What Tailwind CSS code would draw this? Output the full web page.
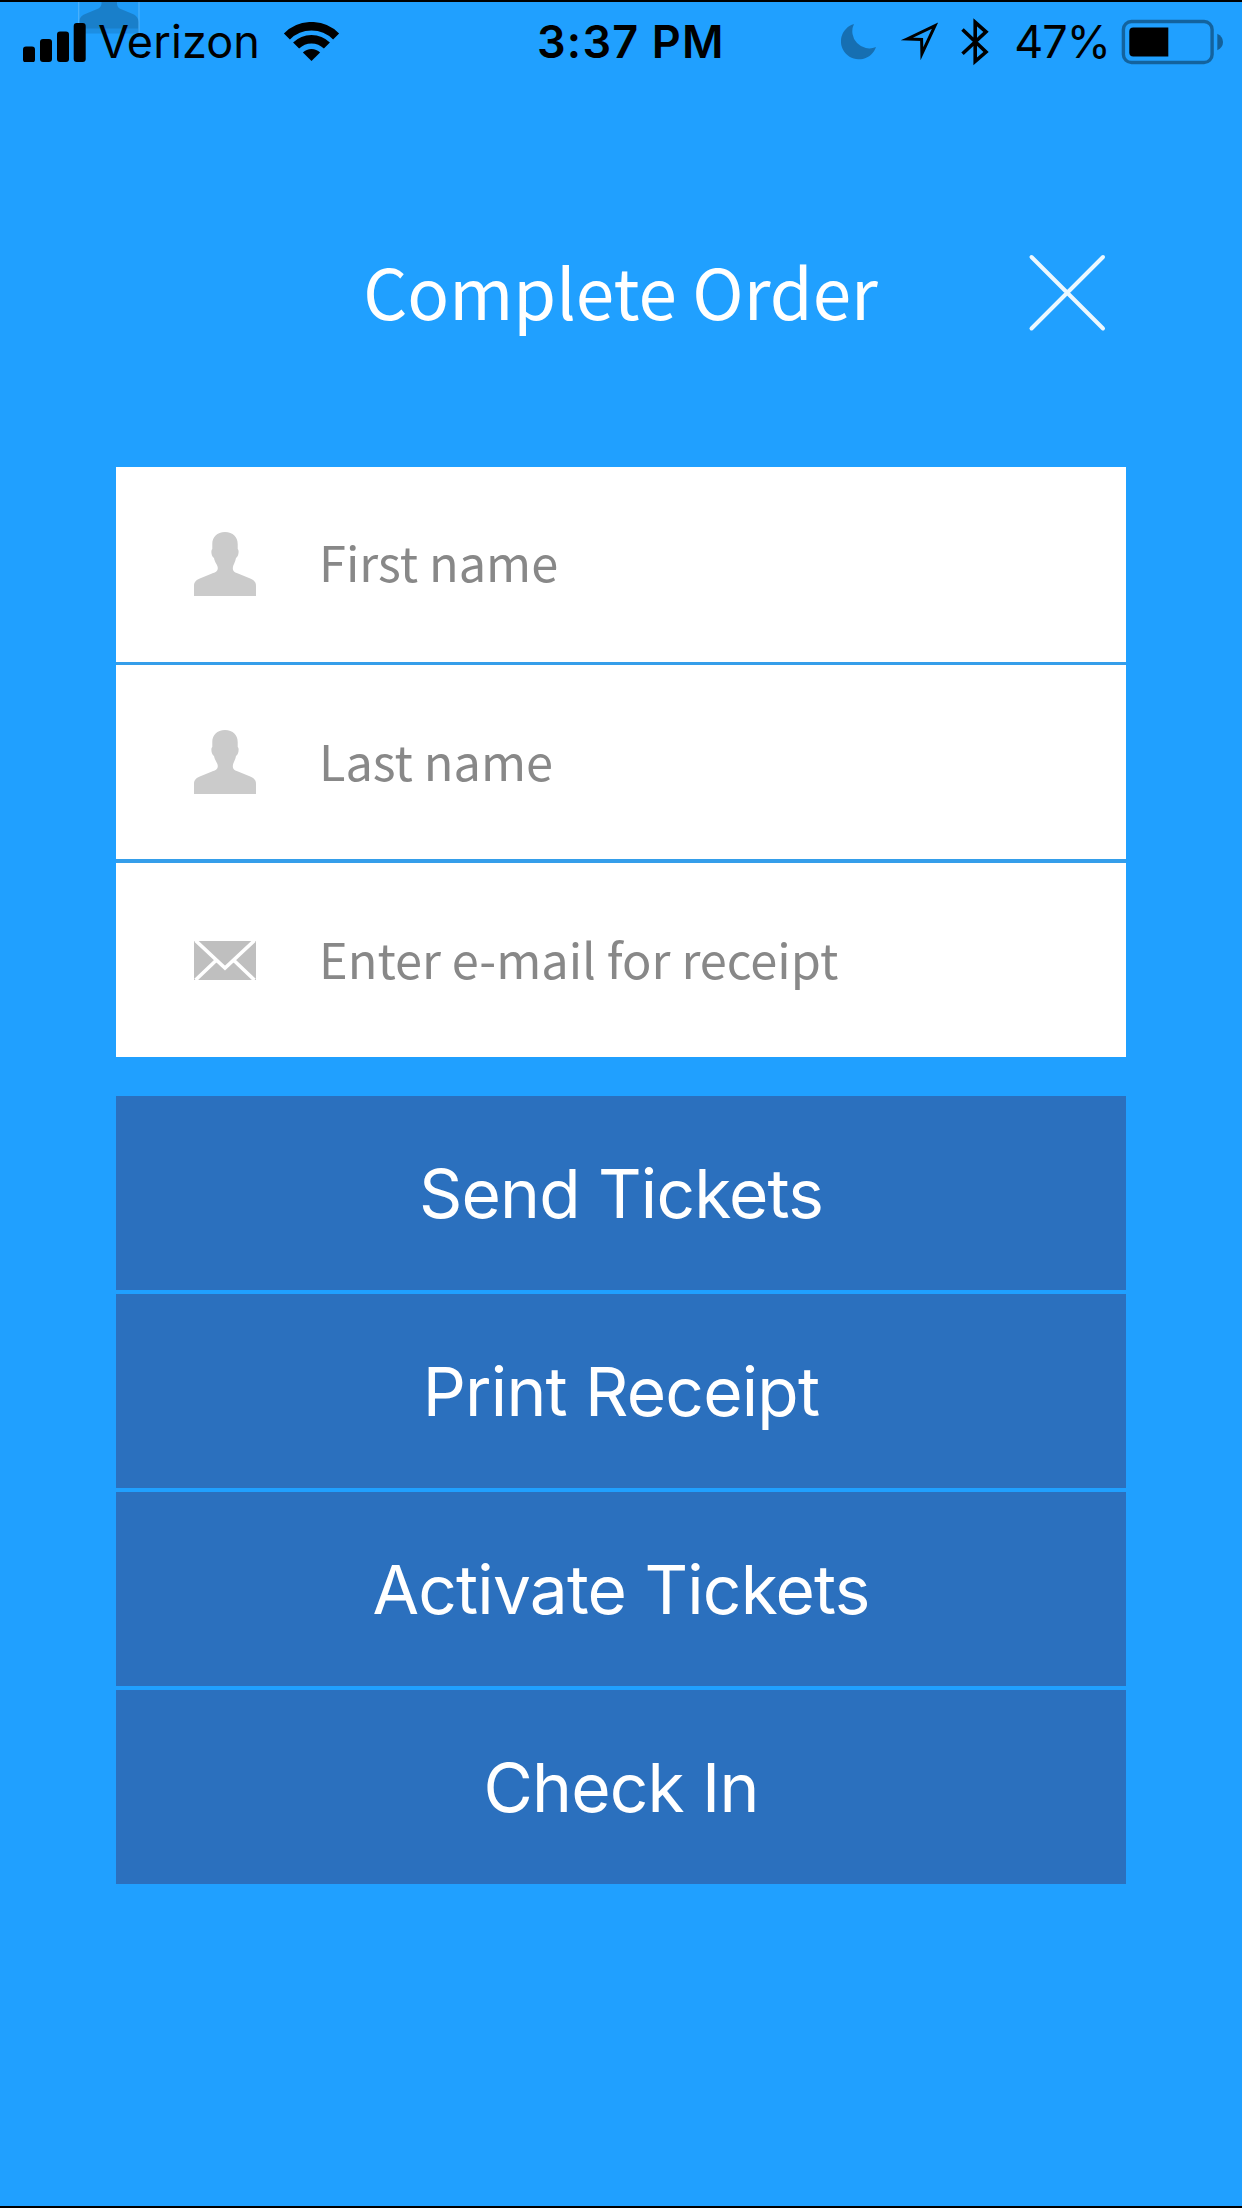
<!DOCTYPE html>
<html lang="en">
<head>
    <meta charset="UTF-8">
    <meta name="viewport" content="width=device-width, initial-scale=1.0">
    <title>Complete Order</title>
    <script src="https://cdn.jsdelivr.net/npm/@tailwindcss/browser@4"></script>
</head>
<body class="bg-[#20a0ff]">
    <div class="relative w-[1242px] h-[2208px] overflow-hidden border-y-2 border-black flex flex-col font-['Inter',sans-serif]">

        <!-- Leftover field icon behind the status bar -->
        <svg class="absolute left-[78px] top-0" width="62" height="32" viewBox="0 34 62 32">
            <rect x="0" y="34" width="62" height="31.5" fill="#000" fill-opacity=".03"/>
            <path d="M.7 34V66M61 34V66" stroke="#5cbaff" stroke-opacity=".7" stroke-width="1.3"/>
            <rect x="1" y="60.5" width="60" height="5" fill="#000" fill-opacity=".08"/>
            <path d="M23.5 34V35C23.5 39 21 40.5 18 41.5L6 46.5C2.5 48.5 1.5 50.5 1.5 54V60.5H60.5V54C60.5 50.5 59 48.5 56 46.5L44 41.5C41 40.5 39 39 39 35V34Z" fill="#000" fill-opacity=".18"/>
        </svg>

        <!-- Status Bar -->
        <header class="relative grid grid-cols-[536px_auto_1fr] h-20 shrink-0 text-[45px] leading-[80px] text-black whitespace-nowrap">
            <div class="flex items-center pl-[23px]">
                <svg width="63" height="40" viewBox="0 0 63 40">
                    <rect x="0" y="24.5" width="12" height="16" rx="3"/>
                    <rect x="17" y="17" width="12" height="23" rx="3"/>
                    <rect x="34" y="9.5" width="12" height="30.5" rx="3"/>
                    <rect x="50.7" y="1" width="12" height="39" rx="3"/>
                </svg>
                <span class="ml-3 tracking-[0.1px]">Verizon</span>
                <svg class="ml-[23px]" width="57" height="40" viewBox="0 0 57 40" fill="none" stroke="#000" stroke-width="8.5">
                    <path d="M3.9 14.4A34.75 34.75 0 0 1 53.1 14.4"/>
                    <path d="M13.1 23.6A21.75 21.75 0 0 1 43.9 23.6"/>
                    <path d="M28.5 39L19.9 30.5A12.2 12.2 0 0 1 37.1 30.5Z" fill="#000" stroke="none"/>
                </svg>
            </div>
            <span class="pl-px font-semibold tracking-[1.2px]">3:37 PM</span>
            <div class="flex items-center justify-end pr-[18px]">
                <svg width="36" height="40" viewBox="842 20 36 40">
                    <path d="M855 22A18 18 0 1 0 877 45A17 17 0 0 1 855 22Z" fill="#000" fill-opacity=".3"/>
                </svg>
                <svg class="ml-[23px]" width="39" height="44" viewBox="901 20 39 44">
                    <path d="M908 39L936 25.7L922.9 53.7L922.6 39.4Z" fill="none" stroke="#000" stroke-width="3" stroke-miterlimit="10"/>
                </svg>
                <svg class="ml-[22px]" width="29" height="50" viewBox="962 16 29 50">
                    <path d="M963.5 28.5L987 51L976.2 60.3V21.3L987 30.8L963.5 52.8" fill="none" stroke="#000" stroke-width="3.6" stroke-miterlimit="10"/>
                </svg>
                <span class="ml-6 tracking-[-1px]">47%</span>
                <svg class="ml-[11px]" width="103" height="46" viewBox="1121 17.5 103 46">
                    <rect x="1123.4" y="20" width="88.7" height="41" rx="8" fill="none" stroke="#000" stroke-opacity=".38" stroke-width="3.4"/>
                    <path d="M1168.3 26V55H1133.3Q1129.3 55 1129.3 51V30Q1129.3 26 1133.3 26Z"/>
                    <path d="M1217.3 32.3Q1223 35 1223 40.5T1217.3 48.7Z" fill-opacity=".4"/>
                </svg>
            </div>
        </header>

        <!-- Title -->
        <div class="relative h-[385px] shrink-0">
            <h1 class="pt-[158px] pr-px text-center text-[69.2px] leading-[100px] text-white font-['Noto_Sans_CJK_SC',sans-serif]">Complete Order</h1>
            <button class="absolute left-[1027px] top-[171px]">
                <svg width="80" height="80" viewBox="0 0 80 80">
                    <path d="M4.5 4L76 75.5M76 4L4.5 75.5" stroke="#ecf8ff" stroke-width="4" stroke-linecap="round"/>
                </svg>
            </button>
        </div>

        <!-- Fields -->
        <div class="mx-[116px] w-[1010px] shrink-0 bg-[#359eea] text-[48.7px] text-[#888] font-['Noto_Sans_CJK_SC',sans-serif]">
            <div class="flex items-center h-[195px] pl-[78px] pb-px bg-white">
                <svg width="62" height="64" viewBox="0 0 62 64" fill="#cbcbcb">
                    <path d="M31 0C39 0 43.7 5 43.7 12V17C45.5 18 44.5 25 42 26C41.5 30 38.8 33 38.8 36C38.8 39.5 41 40.5 44 41.5L55 46C60 48 62 50 62 54V64H0V54C0 50 2 48 7 46L18 41.5C21 40.5 23.8 39.5 23.8 36C23.8 33 20.5 30 20 26C17.5 25 16.5 18 18.3 17V12C18.3 5 23 0 31 0Z"/>
                </svg>
                <span class="ml-[63px] pb-[6px] leading-[72px]">First name</span>
            </div>
            <div class="flex items-center h-[194px] mt-[3px] pl-[78px] bg-white">
                <svg width="62" height="64" viewBox="0 0 62 64" fill="#cbcbcb">
                    <path d="M31 0C39 0 43.7 5 43.7 12V17C45.5 18 44.5 25 42 26C41.5 30 38.8 33 38.8 36C38.8 39.5 41 40.5 44 41.5L55 46C60 48 62 50 62 54V64H0V54C0 50 2 48 7 46L18 41.5C21 40.5 23.8 39.5 23.8 36C23.8 33 20.5 30 20 26C17.5 25 16.5 18 18.3 17V12C18.3 5 23 0 31 0Z"/>
                </svg>
                <span class="ml-[63px] pb-[5px] leading-[72px]">Last name</span>
            </div>
            <div class="flex items-center h-[194px] mt-1 pl-[78px] bg-white">
                <svg width="62" height="39" viewBox="0 0 62 39">
                    <rect width="62" height="39" fill="#bfbfbf"/>
                    <path d="M1.5 -.5L31 27L60.5 -.5M22 19.5L1.5 39M40 19.5L60.5 39" fill="none" stroke="#fff" stroke-width="3.6"/>
                </svg>
                <span class="ml-[63px] pb-[5px] leading-[72px]">Enter e-mail for receipt</span>
            </div>
        </div>

        <!-- Buttons -->
        <div class="mx-[116px] mt-[39px] w-[1010px] flex flex-col gap-1 shrink-0 text-[67.6px] leading-[193px] tracking-[-0.8px] text-white">
            <button class="h-[194px] pt-px bg-[#2b70be]">Send Tickets</button>
            <button class="h-[194px] pt-px bg-[#2b70be]">Print Receipt</button>
            <button class="h-[194px] pt-px bg-[#2b70be]">Activate Tickets</button>
            <button class="h-[194px] pt-px bg-[#2b70be]">Check In</button>
        </div>
    </div>
</body>
</html>
